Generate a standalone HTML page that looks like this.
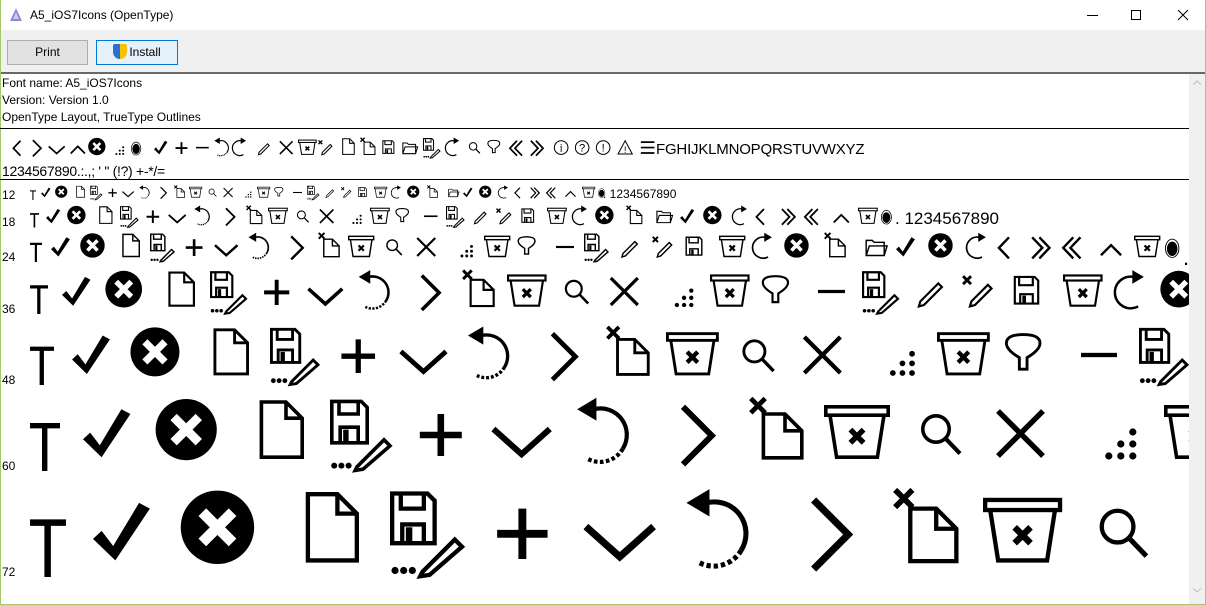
<!DOCTYPE html>
<html><head><meta charset="utf-8"><style>
*{margin:0;padding:0;box-sizing:border-box}
body{width:1206px;height:605px;overflow:hidden;background:#fff;position:relative;font-family:"Liberation Sans",sans-serif;color:#000}
#win{position:absolute;left:0;top:0;width:1206px;height:605px;border:1px solid #a8c66c;border-top:none}
.abs{position:absolute;white-space:nowrap}
#tb{left:1px;top:30px;width:1204px;height:42px;background:#f0f0f0}
#sep{left:1px;top:72px;width:1204px;height:2px;background:#696969}
.btn{top:40px;height:25px;font-size:12px;line-height:23px;text-align:center;border:1px solid #adadad;background:#e1e1e1}
#sb{left:1189px;top:74px;width:16px;height:530px;background:#f0f0f0}
.t12{font-size:12px}
#clip{position:absolute;left:0;top:74px;width:1189px;height:531px;overflow:hidden}
svg.g{position:absolute;overflow:visible}
</style></head><body>
<div id="win"></div>
<svg class="abs" style="left:8px;top:7px" width="16" height="16" viewBox="0 0 16 16"><path d="M8,1 L14,14 H2 Z" fill="#8a8ad8"/><path d="M8,5 L11,12 H5Z" fill="#c8c8f0"/></svg>
<div class="abs" style="left:30px;top:8px;font-size:12px">A5_iOS7Icons (OpenType)</div>
<div class="abs" style="left:1087px;top:15px;width:11px;height:1px;background:#000"></div>
<div class="abs" style="left:1131px;top:10px;width:10px;height:10px;border:1px solid #000"></div>
<svg class="abs" style="left:1177px;top:9px" width="12" height="12"><path d="M1,1L11,11M11,1L1,11" stroke="#000" stroke-width="1"/></svg>
<div id="tb" class="abs"></div>
<div class="abs btn" style="left:7px;width:81px">Print</div>
<div class="abs btn" style="left:96px;width:82px;background:#e5f1fb;border-color:#0078d7"><span style="display:inline-block;width:14px;height:15px;vertical-align:-3px;margin-right:2px;background:linear-gradient(90deg,#2a6fd1 50%,#f3c200 50%);border-radius:2px 2px 7px 7px"></span>Install</div>
<div id="sep" class="abs"></div>
<div id="sb" class="abs"><svg style="position:absolute;left:4px;top:6px" width="8" height="5"><path d="M0,5L4,1L8,5" stroke="#c0c0c0" fill="none"/></svg><svg style="position:absolute;left:4px;top:514px" width="8" height="5"><path d="M0,0L4,4L8,0" stroke="#c0c0c0" fill="none"/></svg></div>
<div id="clip">
<div class="abs t12" style="left:2px;top:2px">Font name: A5_iOS7Icons</div>
<div class="abs t12" style="left:2px;top:19px">Version: Version 1.0</div>
<div class="abs t12" style="left:2px;top:36px">OpenType Layout, TrueType Outlines</div>
<div class="abs" style="left:0;top:54px;width:1189px;height:1px;background:#000"></div>
<div class="abs" style="left:656px;top:67px;font-size:15px;letter-spacing:-0.2px">FGHIJKLMNOPQRSTUVWXYZ</div>
<div class="abs" style="left:2px;top:89px;font-size:14px;letter-spacing:-0.3px">1234567890.:.,; ' " (!?) +-*/=</div>
<div class="abs" style="left:0;top:105px;width:1189px;height:1px;background:#000"></div>
<div class="abs t12" style="left:2px;top:114px">12</div>
<div class="abs t12" style="left:2px;top:141px">18</div>
<div class="abs t12" style="left:2px;top:176px">24</div>
<div class="abs t12" style="left:2px;top:228px">36</div>
<div class="abs t12" style="left:2px;top:299px">48</div>
<div class="abs t12" style="left:2px;top:385px">60</div>
<div class="abs t12" style="left:2px;top:491px">72</div>
<div class="abs" style="left:603px;top:113px;font-size:12px">. 1234567890</div>
<div class="abs" style="left:895px;top:135px;font-size:17px">. 1234567890</div>
<div class="abs" style="left:1183px;top:171px;font-size:22px">.</div>
<div id="G"></div>
</div>
<svg width="0" height="0" style="position:absolute">
<defs>
<symbol id="T" viewBox="0 0 130 135" overflow="visible"><path d="M0,45h50v9H0z M20,45h9v80h-9z"/></symbol>
<symbol id="ck" viewBox="0 0 130 135" overflow="visible"><path d="M0,72 L12,61 L28,82 L64,22 L79,30 L31,102 Z"/></symbol>
<symbol id="cx" viewBox="0 0 130 135" overflow="visible"><circle cx="52" cy="56" r="51"/><path d="M31,35 L73,77 M73,35 L31,77" stroke="#fff" stroke-width="15"/></symbol>
<symbol id="doc" viewBox="0 0 130 135" overflow="visible"><path d="M4,10H45L72,37V102H4Z M45,10V37H72" fill="none" stroke="#000" stroke-width="6"/></symbol>
<symbol id="fp" viewBox="0 0 130 135" overflow="visible"><g fill="none" stroke="#000" stroke-width="6"><path d="M3,9H52L62,19V78H3Z"/><path d="M15,9V30H47V9"/><path d="M17,78V52H47V78"/></g><rect x="22" y="56" width="9" height="20"/><circle cx="7" cy="116" r="5"/><circle cx="19" cy="116" r="5"/><circle cx="31" cy="116" r="5"/><path d="M45,118 L90,73 L100,83 L55,122 L42,124Z" fill="none" stroke="#000" stroke-width="6"/></symbol>
<symbol id="pl" viewBox="0 0 130 135" overflow="visible"><path d="M38,30V100M3,65H73" stroke="#000" stroke-width="11"/></symbol>
<symbol id="cd" viewBox="0 0 130 135" overflow="visible"><path d="M4,55 L51,97 L98,55" fill="none" stroke="#000" stroke-width="10"/></symbol>
<symbol id="un" viewBox="0 0 130 135" overflow="visible"><path d="M30,22 A44,44 0 0 1 78,88" fill="none" stroke="#000" stroke-width="7"/><path d="M78,88 A44,44 0 0 1 18,104" fill="none" stroke="#000" stroke-width="7" stroke-dasharray="6 4"/><path d="M2,22 L34,3 L34,41Z"/></symbol>
<symbol id="re" viewBox="0 0 130 135" overflow="visible"><g transform="translate(85,0) scale(-1,1)"><path d="M30,22 A44,44 0 1 1 18,104" fill="none" stroke="#000" stroke-width="7"/><path d="M2,22 L34,3 L34,41Z"/></g></symbol>
<symbol id="cr" viewBox="0 0 130 135" overflow="visible"><path d="M5,18 L53,66 L5,114" fill="none" stroke="#000" stroke-width="10"/></symbol>
<symbol id="dx" viewBox="0 0 130 135" overflow="visible"><path d="M3,4 L27,28 M27,4 L3,28" stroke="#000" stroke-width="8"/><path d="M24,30H60L88,58V103H24Z M60,30V58H88" fill="none" stroke="#000" stroke-width="6"/></symbol>
<symbol id="bk" viewBox="0 0 130 135" overflow="visible"><g fill="none" stroke="#000" stroke-width="6"><rect x="3" y="18" width="104" height="14"/><path d="M10,32 L21,102 H89 L100,32"/></g><path d="M44,56 L66,78 M66,56 L44,78" stroke="#000" stroke-width="9"/></symbol>
<symbol id="mg" viewBox="0 0 130 135" overflow="visible"><circle cx="30" cy="55" r="22" fill="none" stroke="#000" stroke-width="6"/><path d="M46,71 L70,96" stroke="#000" stroke-width="7"/></symbol>
<symbol id="X" viewBox="0 0 130 135" overflow="visible"><path d="M5,25 L80,100 M80,25 L5,100" stroke="#000" stroke-width="9"/></symbol>
<symbol id="dt" viewBox="0 0 130 135" overflow="visible"><circle cx="8" cy="100" r="6"/><circle cx="28" cy="100" r="6"/><circle cx="48" cy="100" r="6"/><circle cx="28" cy="80" r="6"/><circle cx="48" cy="80" r="6"/><circle cx="48" cy="60" r="6"/></symbol>
<symbol id="fn" viewBox="0 0 130 135" overflow="visible"><path d="M5,38 Q5,20 40,20 Q75,20 75,38 Q75,52 48,68 V92 H32 V68 Q5,52 5,38Z" fill="none" stroke="#000" stroke-width="6"/></symbol>
<symbol id="mi" viewBox="0 0 130 135" overflow="visible"><rect x="0" y="58" width="75" height="9"/></symbol>
<symbol id="pn" viewBox="0 0 130 135" overflow="visible"><path d="M8,104 L12,90 L62,40 L72,50 L22,100Z" fill="none" stroke="#000" stroke-width="6"/></symbol>
<symbol id="xp" viewBox="0 0 130 135" overflow="visible"><path d="M3,20 L25,42 M25,20 L3,42" stroke="#000" stroke-width="8"/><path d="M22,104 L26,90 L72,44 L82,54 L36,100Z" fill="none" stroke="#000" stroke-width="6"/></symbol>
<symbol id="fl" viewBox="0 0 130 135" overflow="visible"><g fill="none" stroke="#000" stroke-width="6"><path d="M5,22H60L70,32V96H5Z"/><path d="M17,22V45H55V22"/><path d="M20,96V70H55V96"/></g><rect x="26" y="74" width="10" height="20"/></symbol>
<symbol id="fo" viewBox="0 0 130 135" overflow="visible"><path d="M5,35 H30 L38,43 H80 V98 H5 Z M5,98 L18,58 H92 L80,98" fill="none" stroke="#000" stroke-width="6"/></symbol>
<symbol id="lt" viewBox="0 0 130 135" overflow="visible"><path d="M50,22 L8,66 L50,110" fill="none" stroke="#000" stroke-width="10"/></symbol>
<symbol id="rr" viewBox="0 0 130 135" overflow="visible"><path d="M5,22 L47,66 L5,110 M35,22 L77,66 L35,110" fill="none" stroke="#000" stroke-width="10"/></symbol>
<symbol id="ll" viewBox="0 0 130 135" overflow="visible"><path d="M47,22 L5,66 L47,110 M77,22 L35,66 L77,110" fill="none" stroke="#000" stroke-width="10"/></symbol>
<symbol id="up" viewBox="0 0 130 135" overflow="visible"><path d="M4,97 L46,55 L88,97" fill="none" stroke="#000" stroke-width="10"/></symbol>
<symbol id="rg" viewBox="0 0 130 135" overflow="visible"><ellipse cx="30" cy="68" rx="28" ry="38" fill="none" stroke="#000" stroke-width="4"/><ellipse cx="30" cy="70" rx="22" ry="30"/></symbol>
<symbol id="ci" viewBox="0 0 130 135" overflow="visible"><circle cx="48" cy="62" r="40" fill="none" stroke="#000" stroke-width="6"/><text x="48" y="86" font-size="66" text-anchor="middle" font-family="Liberation Serif,serif">i</text></symbol>
<symbol id="cq" viewBox="0 0 130 135" overflow="visible"><circle cx="48" cy="62" r="40" fill="none" stroke="#000" stroke-width="6"/><text x="48" y="86" font-size="66" text-anchor="middle" font-family="Liberation Sans,sans-serif">?</text></symbol>
<symbol id="ce" viewBox="0 0 130 135" overflow="visible"><circle cx="48" cy="62" r="40" fill="none" stroke="#000" stroke-width="6"/><text x="48" y="86" font-size="66" text-anchor="middle" font-family="Liberation Sans,sans-serif">!</text></symbol>
<symbol id="wa" viewBox="0 0 130 135" overflow="visible"><path d="M48,22 L90,100 H6Z" fill="none" stroke="#000" stroke-width="6"/><text x="48" y="94" font-size="56" text-anchor="middle" font-family="Liberation Sans,sans-serif">!</text></symbol>
<symbol id="mn" viewBox="0 0 130 135" overflow="visible"><path d="M5,30H85M5,62H85M5,94H85" stroke="#000" stroke-width="10"/></symbol>
</defs></svg>
<script>
var seq=[["T",0],["ck",.875],["cx",2.08],["doc",3.82],["fp",5.0],["pl",6.46],["cd",7.68],["un",9.1],["cr",10.83],["dx",11.99],["bk",13.24],["mg",14.8],["X",16.08],["dt",17.9],["bk",18.9],["fn",20.3],["mi",21.9],["fp",23.1],["pn",24.6],["xp",25.9],["fl",27.3],["bk",28.7],["re",30.1],["cx",31.4],["dx",33.1],["fo",34.8],["ck",36.1],["cx",37.4],["re",39],["lt",40.3],["rr",41.7],["ll",43],["up",44.6],["bk",46],["rg",47.3]];
var rows=[[12,126],[18,153],[24,188],[36,240],[48,311],[60,397],[72,503]];
var G=document.getElementById("G"),h="";
function g(id,x,base,s){h+='<svg class="g" style="left:'+x.toFixed(1)+'px;top:'+(base-1.25*s).toFixed(1)+'px" width="'+(1.3*s).toFixed(1)+'" height="'+(1.35*s).toFixed(1)+'"><use href="#'+id+'"/></svg>';}
rows.forEach(function(r){var s=r[0],b=r[1];seq.forEach(function(q){var x=30+q[1]*s;if(x<1200)g(q[0],x,b,s);});});
var top1=[["lt",12],["cr",32],["cd",48],["up",70],["cx",88],["dt",115],["rg",131],["ck",154],["pl",175],["mi",196],["un",214],["re",232],["pn",257],["X",279],["bk",298],["xp",318],["doc",342],["dx",360],["fl",382],["fo",402],["fp",423],["re",445],["mg",468],["fn",487],["ll",509],["rr",530],["ci",553],["cq",574],["ce",595],["wa",617],["mn",640]];
top1.forEach(function(q){g(q[0],q[1],84,17);});
G.innerHTML=h;
</script>
</body></html>
